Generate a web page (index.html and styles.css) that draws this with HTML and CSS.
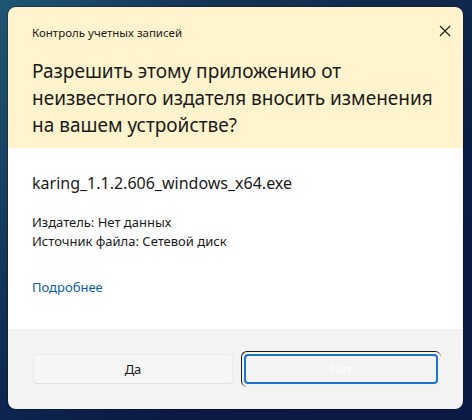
FILE: index.html
```html
<!DOCTYPE html>
<html lang="ru">
<head>
<meta charset="utf-8">
<title>Контроль учетных записей</title>
<link rel="stylesheet" href="styles.css">
</head>
<body>
<div class="dialog">
  <div class="header">
    <div class="title-row">
      <div class="title">Контроль учетных записей</div>
      <svg class="close" width="12" height="12" viewBox="0 0 12 12"><path d="M1 1 L11 11 M11 1 L1 11" stroke="#1a1a1a" stroke-width="1.1" fill="none"/></svg>
    </div>
    <div class="question">Разрешить этому приложению от неизвестного издателя вносить изменения на вашем устройстве?</div>
  </div>
  <div class="content">
    <div class="filename">karing_1.1.2.606_windows_x64.exe</div>
    <div class="info">
      <div>Издатель: Нет данных</div>
      <div>Источник файла: Сетевой диск</div>
    </div>
    <div class="more">Подробнее</div>
  </div>
  <div class="footer">
    <div class="btn yes">Да</div>
    <div class="btn no">Нет</div>
  </div>
</div>
</body>
</html>
```

FILE: styles.css
```css
html, body {
  margin: 0;
  height: 100%;
}
body {
  width: 472px;
  height: 420px;
  overflow: hidden;
  box-sizing: border-box;
  padding: 7px 9px 11px 8px;
  font-family: "Noto Sans", "Segoe UI", sans-serif;
  background:
    linear-gradient(115deg, rgba(40,110,140,0.55) 0%, rgba(20,60,100,0.3) 30%, rgba(8,20,60,0) 55%),
    linear-gradient(160deg, #163656 0%, #0c2248 40%, #0a1a44 70%, #0b1b46 100%);
}
.dialog {
  width: 455px;
  height: 402px;
  border-radius: 8px;
  overflow: hidden;
  display: flex;
  flex-direction: column;
  box-shadow: 0 0 0 1px rgba(0,0,0,0.25);
}
.header {
  background: #fff4ce;
  height: 141px;
  box-sizing: border-box;
  padding: 16px 0 0 24px;
}
.title-row {
  display: flex;
  justify-content: space-between;
  align-items: flex-start;
}
.title {
  font-size: 11.5px;
  line-height: 20px;
  color: #1a1a1a;
}
.close {
  margin: 2px 12px 0 0;
}
.question {
  margin-top: 15px;
  font-size: 19px;
  line-height: 27px;
  color: #1a1a1a;
  width: 415px;
}
.content {
  background: #ffffff;
  height: 181px;
  box-sizing: border-box;
  padding: 25px 0 0 24px;
}
.filename {
  font-size: 16px;
  line-height: 20px;
  color: #1a1a1a;
}
.info {
  margin-top: 19.5px;
  font-size: 13px;
  line-height: 19px;
  color: #1a1a1a;
}
.more {
  margin-top: 27px;
  font-size: 13px;
  line-height: 19px;
  color: #0b5cad;
}
.footer {
  background: #f3f3f3;
  flex: 1;
  display: flex;
  padding: 25px 0 0 25px;
  gap: 11px;
}
.btn {
  height: 30px;
  box-sizing: border-box;
  border-radius: 4px;
  display: flex;
  align-items: center;
  justify-content: center;
  font-size: 13px;
}
.yes {
  width: 200px;
  background: #f6f6f6;
  border: 1px solid #ebebeb;
  border-bottom-color: #e0e0e0;
  color: #1a1a1a;
}
.no {
  width: 194px;
  position: relative;
  border: 2px solid #1c74d0;
  background: #f3f3f3;
  color: #ffffff;
}
.no::before {
  content: "";
  position: absolute;
  left: -5px;
  top: -5px;
  right: -5px;
  bottom: -5px;
  border-top: 1.5px solid #1a1a1a;
  border-left: 1.5px solid #1a1a1a;
  border-radius: 6px;
}
```
